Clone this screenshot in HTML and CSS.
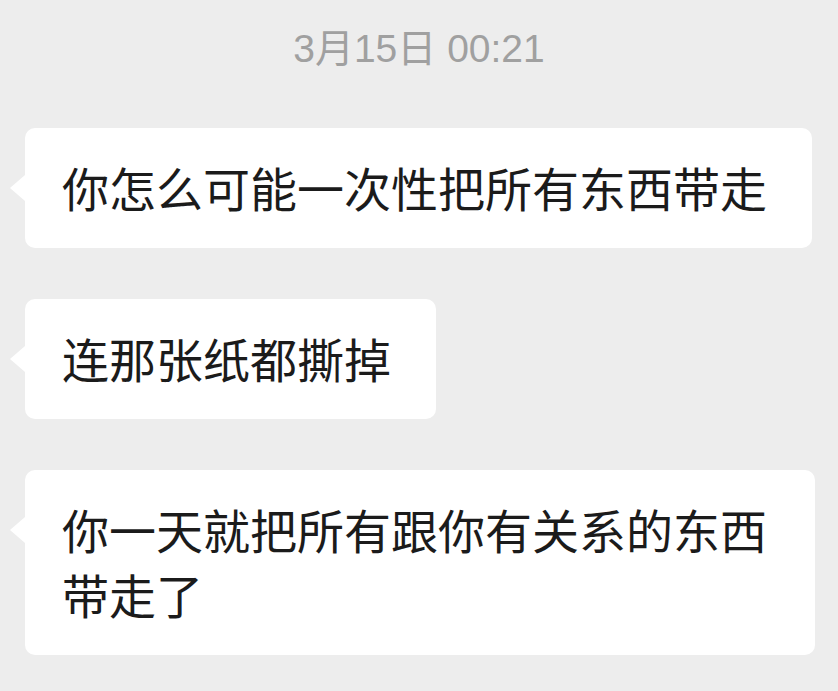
FILE: index.html
```html
<!DOCTYPE html>
<html>
    <head>
        <meta charset="utf-8" />
        <title>聊天</title>
        <link rel="stylesheet" href="styles.css">
    </head>
    <body>
        <div id="chat">
            <div class="time">3月15日 00:21</div>
            <div class="msg">
                <div class="bubble">你怎么可能一次性把所有东西带走</div>
            </div>
            <div class="msg">
                <div class="bubble">连那张纸都撕掉</div>
            </div>
            <div class="msg">
                <div class="bubble">你一天就把所有跟你有关系的东西带走了</div>
            </div>
        </div>
    </body>
</html>
```

FILE: styles.css
```css
body {
    margin:0;
    padding:0;
    background-color:#EDEDED;
    font-family:"Noto Sans CJK SC", "Noto Sans", sans-serif;
}

#chat {
    width:838px;
    height:691px;
    padding-top:26px;
    box-sizing:border-box;
    overflow:hidden;
}

#chat .time {
    text-align:center;
    font-family:"Liberation Sans", "Noto Sans CJK SC", sans-serif;
    font-size:39px;
    line-height:46px;
    color:#A0A0A0;
    margin-bottom:56px;
}

#chat .msg {
    display:flex;
    padding-left:25px;
    margin-bottom:51px;
}

#chat .bubble {
    position:relative;
    max-width:790px;
    box-sizing:border-box;
    background-color:#FFF;
    border-radius:10px;
    padding:26px 45px 29px 37px;
    font-size:47px;
    line-height:65px;
    color:#1B1B1B;
}

/* little arrow on the left side of the bubble */
#chat .bubble:before {
    content:'';
    position:absolute;
    left:-15px;
    top:47px;
    border-top:13px solid transparent;
    border-bottom:13px solid transparent;
    border-right:15px solid #FFF;
}
```
